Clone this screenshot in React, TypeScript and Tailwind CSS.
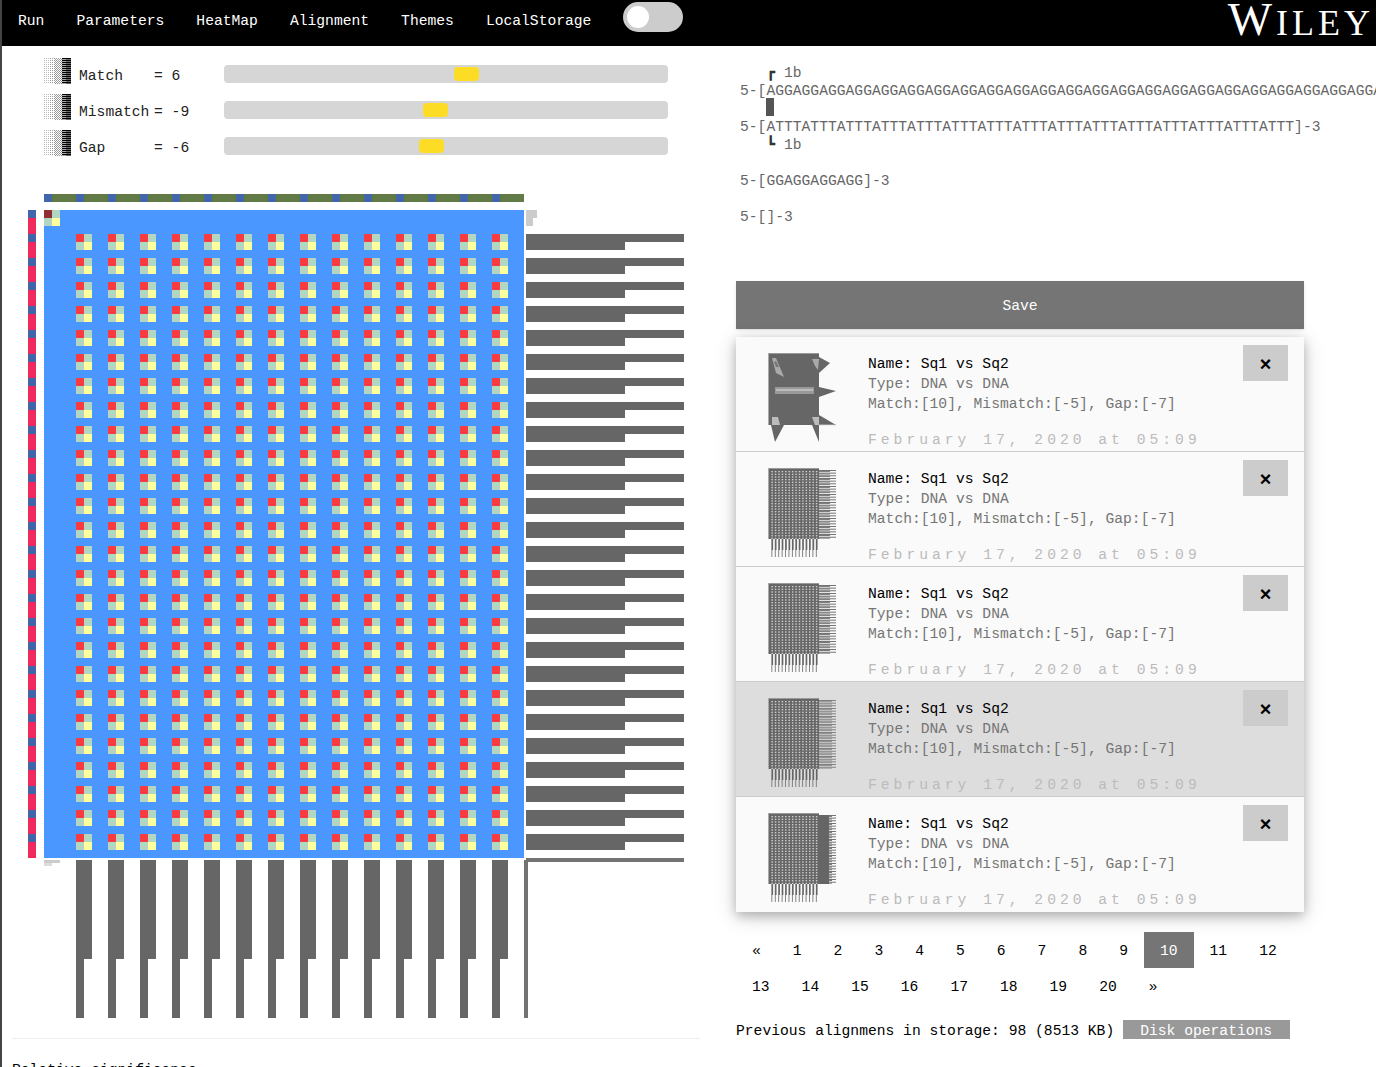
const MONO = "font-['Liberation_Mono','DejaVu_Sans_Mono',monospace]";

const NAV_ITEMS = ['Run', 'Parameters', 'HeatMap', 'Alignment', 'Themes', 'LocalStorage'];

const SLIDERS = [
  { label: 'Match', value: '= 6', thumb: 'ml-[230px]' },
  { label: 'Mismatch', value: '= -9', thumb: 'ml-[199px]' },
  { label: 'Gap', value: '= -6', thumb: 'ml-[195px]' },
];

const range = (n: number) => Array.from({ length: n }, (_, i) => i);

function Halftone() {
  const cells: { x: number; y: number; c: string }[] = [];
  for (let y = 0; y < 26; y++) {
    for (let x = 0; x < 27; x++) {
      if (x >= 18) {
        cells.push({ x, y, c: y % 2 === 0 ? '#000' : x > 21 ? '#666' : '#aaa' });
      } else if (x >= 10) {
        if ((x + y) % 2 === 0) cells.push({ x, y, c: '#999' });
      } else if (x % 2 === 0 && y % 2 === 0) {
        cells.push({ x, y, c: x > 4 ? '#999' : '#bbb' });
      }
    }
  }
  return (
    <svg width="27" height="26" viewBox="0 0 27 26" className="shrink-0">
      {cells.map((p) => (
        <rect key={`${p.x}-${p.y}`} x={p.x} y={p.y} width="1" height="1" fill={p.c} />
      ))}
    </svg>
  );
}

function BlobThumb() {
  return (
    <svg width="68" height="90" viewBox="0 0 68 90" className="shrink-0">
      <rect x="0" y="0" width="51" height="72" fill="#666" />
      <rect x="0" y="0" width="51" height="1" fill="#999" />
      <rect x="0" y="0" width="1" height="72" fill="#aaa" />
      <polygon points="51,4 62,10 51,20" fill="#666" />
      <polygon points="51,34 68,38 51,44" fill="#666" />
      <polygon points="51,62 68,72 51,72" fill="#666" />
      <rect x="51" y="71.5" width="17" height="0.7" fill="#bbb" />
      <polygon points="3,72 16,72 7,89" fill="#666" />
      <polygon points="44,72 51,72 51,89" fill="#666" />
      <polygon points="4,5 8,5 16,24 8,20" fill="#aaa" />
      <polygon points="6,9 8,8 11,14 8,14" fill="#777" />
      <polygon points="44,6 51,6 50,17 47,13" fill="#aaa" />
      <rect x="7" y="34" width="39" height="7" fill="#999" />
      <rect x="8" y="36" width="37" height="2" fill="#bbb" />
      <polygon points="4,64 10,64 12,72 4,72" fill="#bbb" />
      <polygon points="44,64 51,64 51,72 47,72" fill="#bbb" />
    </svg>
  );
}

function GridThumb({ variant }: { variant: 'sparse' | 'fine' | 'solid' }) {
  const rowGap = 2.67;
  const colGap = 3.42;
  const rows = range(26);
  const cols = range(14);
  return (
    <svg width="68" height="90" viewBox="0 0 68 90" className="shrink-0">
      <rect x="0" y="0" width="51" height="71" fill="#666" />
      <rect x="0" y="0" width="51" height="1" fill="#999" />
      <rect x="0" y="0" width="1" height="71" fill="#aaa" />
      {cols.map((c) =>
        rows.map((r) => (
          <rect key={`${c}-${r}`} x={3.4 + c * colGap} y={3 + r * rowGap} width="1.5" height="1.3" fill="#d0d0d0" />
        )),
      )}
      {variant === 'solid' && <rect x="51" y="2" width="10" height="69" fill="#666" />}
      {rows.map((r) => (
        <g key={r}>
          <rect x="51" y={2 + r * rowGap} width="17" height="0.9" fill={variant === 'fine' ? '#777' : '#666'} />
          <rect
            x="51"
            y={2.9 + r * rowGap}
            width={variant === 'sparse' ? 11 : 13}
            height="0.9"
            fill={variant === 'fine' ? '#888' : '#666'}
          />
        </g>
      ))}
      {cols.map((c) => (
        <g key={c}>
          <rect x={3.4 + c * colGap} y="71" width="1.7" height="11" fill="#666" />
          <rect x={3.4 + c * colGap} y="82" width="0.9" height="7" fill="#777" />
        </g>
      ))}
    </svg>
  );
}

function HeatMap() {
  return (
    <div className="mt-[38px]">
      <div className="ml-[42px] flex h-2 w-[480px]">
        {range(15).map((i) => (
          <div key={i} className="flex">
            <div className="h-2 w-2 bg-[#4166ab]" />
            <div className="h-2 w-6 bg-[#627a46]" />
          </div>
        ))}
      </div>

      <div className="mt-2 ml-[26px] flex h-[650px] items-start">
        <div className="flex w-2 flex-col">
          {range(27).map((i) => (
            <div key={i}>
              <div className="h-2 bg-[#4166ab]" />
              <div className="h-4 bg-[#ee2b5c]" />
            </div>
          ))}
        </div>

        <div className="ml-2 h-[648px] w-[480px] bg-[#4a98ff]">
          <div className="grid w-4 grid-cols-2">
            <div className="h-2 bg-[#8f2f35]" />
            <div className="h-2 bg-[#b3d6c3]" />
            <div className="h-2 bg-[#b3d6c3]" />
            <div className="h-2 bg-[#ffff9f]" />
          </div>
          <div className="mt-2 ml-8 grid grid-cols-[repeat(14,16px)] gap-x-4 gap-y-2">
            {range(14 * 26).map((i) => (
              <div key={i} className="grid grid-cols-2">
                <div className="h-2 bg-[#fb3b41]" />
                <div className="h-2 bg-[#b3d6c3]" />
                <div className="h-2 bg-[#b3d6c3]" />
                <div className="h-2 bg-[#ffff9f]" />
              </div>
            ))}
          </div>
        </div>

        <div className="ml-[2px] w-[158px]">
          <div className="h-6">
            <div className="h-2 w-[11px] bg-[#ccc]" />
            <div className="h-2 w-[7px] bg-[#ccc]" />
          </div>
          <div className="flex flex-col gap-2">
            {range(26).map((i) => (
              <div key={i}>
                <div className="h-2 bg-[#666]" />
                <div className="h-2 w-[99px] bg-[#666]" />
              </div>
            ))}
          </div>
          <div className="mt-2 h-1 bg-[#737373]" />
        </div>
      </div>

      <div className="ml-[42px] flex h-[158px] items-start gap-4">
        <div className="w-4">
          <div className="h-[3px] bg-[#ccc]" />
          <div className="h-[3px] w-2 bg-[#ddd]" />
        </div>
        {range(14).map((i) => (
          <div key={i} className="w-4">
            <div className="h-[99px] bg-[#666]" />
            <div className="h-[59px] w-2 bg-[#666]" />
          </div>
        ))}
        <div className="h-[158px] w-1 bg-[#737373]" />
      </div>
    </div>
  );
}

const SEQ_TOP = 'AGG'.repeat(40);
const SEQ_BOTTOM = 'ATTT'.repeat(15);

const SAVED = [
  { id: 1, thumb: <BlobThumb />, active: false },
  { id: 2, thumb: <GridThumb variant="sparse" />, active: false },
  { id: 3, thumb: <GridThumb variant="sparse" />, active: false },
  { id: 4, thumb: <GridThumb variant="fine" />, active: true },
  { id: 5, thumb: <GridThumb variant="solid" />, active: false },
];

const PAGES = ['«', ...range(20).map((i) => String(i + 1)), '»'];

export default function App() {
  return (
    <div className={`${MONO} flex h-screen flex-col overflow-hidden border-l-2 border-[#444] bg-white text-[14.66px] leading-[18px] text-black`}>
      <nav className="flex h-[46px] shrink-0 items-start bg-black text-white">
        <div className="ml-4 flex gap-8 pt-3">
          {NAV_ITEMS.map((item) => (
            <span key={item}>{item}</span>
          ))}
        </div>
        <div className="mt-[2px] ml-8 h-[30px] w-[60px] rounded-full bg-[#ccc] pt-1 pl-1">
          <div className="h-[22px] w-[22px] rounded-full bg-white" />
        </div>
        <div className="mr-[2px] ml-auto font-['Liberation_Serif',serif] text-[36px] leading-[38px] tracking-[4px]">
          <span className="text-[47px]">W</span>ILEY
        </div>
      </nav>

      <div className="flex min-h-0 flex-1">
        <div className="w-[698px] shrink-0">
          <div className="mt-3 ml-[42px] flex flex-col gap-[10px]">
            {SLIDERS.map((s) => (
              <div key={s.label} className="flex h-[26px] items-start text-[#222]">
                <Halftone />
                <span className="mt-[9px] ml-2 w-[75px]">{s.label}</span>
                <span className="mt-[9px] w-[70px]">{s.value}</span>
                <div className="mt-[7px] h-[18px] w-[444px] rounded-[4px] bg-[#d6d6d6] pt-[2px]">
                  <div className={`h-[14px] w-[25px] rounded-[4px] bg-[#fddc25] ${s.thumb}`} />
                </div>
              </div>
            ))}
          </div>

          <HeatMap />

          <hr className="mt-5 ml-[10px] border-[#eee]" />
          <p className="mt-[22px] ml-[10px]">Relative significance</p>
        </div>

        <div className="ml-9 w-[568px] shrink-0">
          <pre className={`${MONO} mt-[18px] ml-1 text-[14.66px] leading-[18px] text-[#666]`}>
            <span>{'   '}</span>
            <span className="text-[#333]">┏</span>
            {' 1b\n'}
            {`5-[${SEQ_TOP}\n`}
            <span>{'   '}</span>
            <span className="-mt-[2px] inline-block h-[18px] w-2 bg-[#555] align-top" />
            {'\n'}
            {`5-[${SEQ_BOTTOM}]-3\n`}
            <span>{'   '}</span>
            <span className="text-[#333]">┗</span>
            {' 1b\n\n'}
            {'5-[GGAGGAGGAGG]-3\n\n'}
            {'5-[]-3'}
          </pre>

          <button className="mt-[55px] block h-12 w-full bg-[#757575] pt-[2px] text-center text-white shadow-sm">Save</button>

          <ul className="mt-2 bg-[#fafafa] shadow-[0_4px_10px_0_rgba(0,0,0,0.2),0_4px_20px_0_rgba(0,0,0,0.19)]">
            {SAVED.map((item, i) => (
              <li
                key={item.id}
                className={`flex h-[115px] items-start pl-8 ${item.active ? 'bg-[#ddd]' : ''} ${i < SAVED.length - 1 ? 'border-b border-[#ccc]' : ''}`}
              >
                <div className="mt-4">{item.thumb}</div>
                <div className="mt-[17px] ml-8 leading-5">
                  <div>Name: Sq1 vs Sq2</div>
                  <div className="text-[#757575]">Type: DNA vs DNA</div>
                  <div className="text-[#757575]">Match:[10], Mismatch:[-5], Gap:[-7]</div>
                  <div className="mt-4 tracking-[4px] text-[#bbb]">February 17, 2020 at 05:09</div>
                </div>
                <button className="mt-2 mr-4 ml-auto flex h-9 w-[45px] items-center justify-center bg-[#ccc] pt-[6px] text-[20px] font-bold">
                  ×
                </button>
              </li>
            ))}
          </ul>

          <div className="mt-5 flex flex-wrap">
            {PAGES.map((page) => (
              <span key={page} className={`h-9 px-4 leading-[38px] ${page === '10' ? 'bg-[#757575] text-white' : ''}`}>
                {page}
              </span>
            ))}
          </div>

          <div className="mt-4 flex items-start whitespace-nowrap">
            <span className="mt-[2px]">Previous alignmens in storage: 98 (8513 KB)</span>
            <span className="ml-[9px] h-[19px] bg-[#999] pr-[18px] pl-[17px] leading-[23px] text-white">Disk operations</span>
          </div>
        </div>
      </div>
    </div>
  );
}
